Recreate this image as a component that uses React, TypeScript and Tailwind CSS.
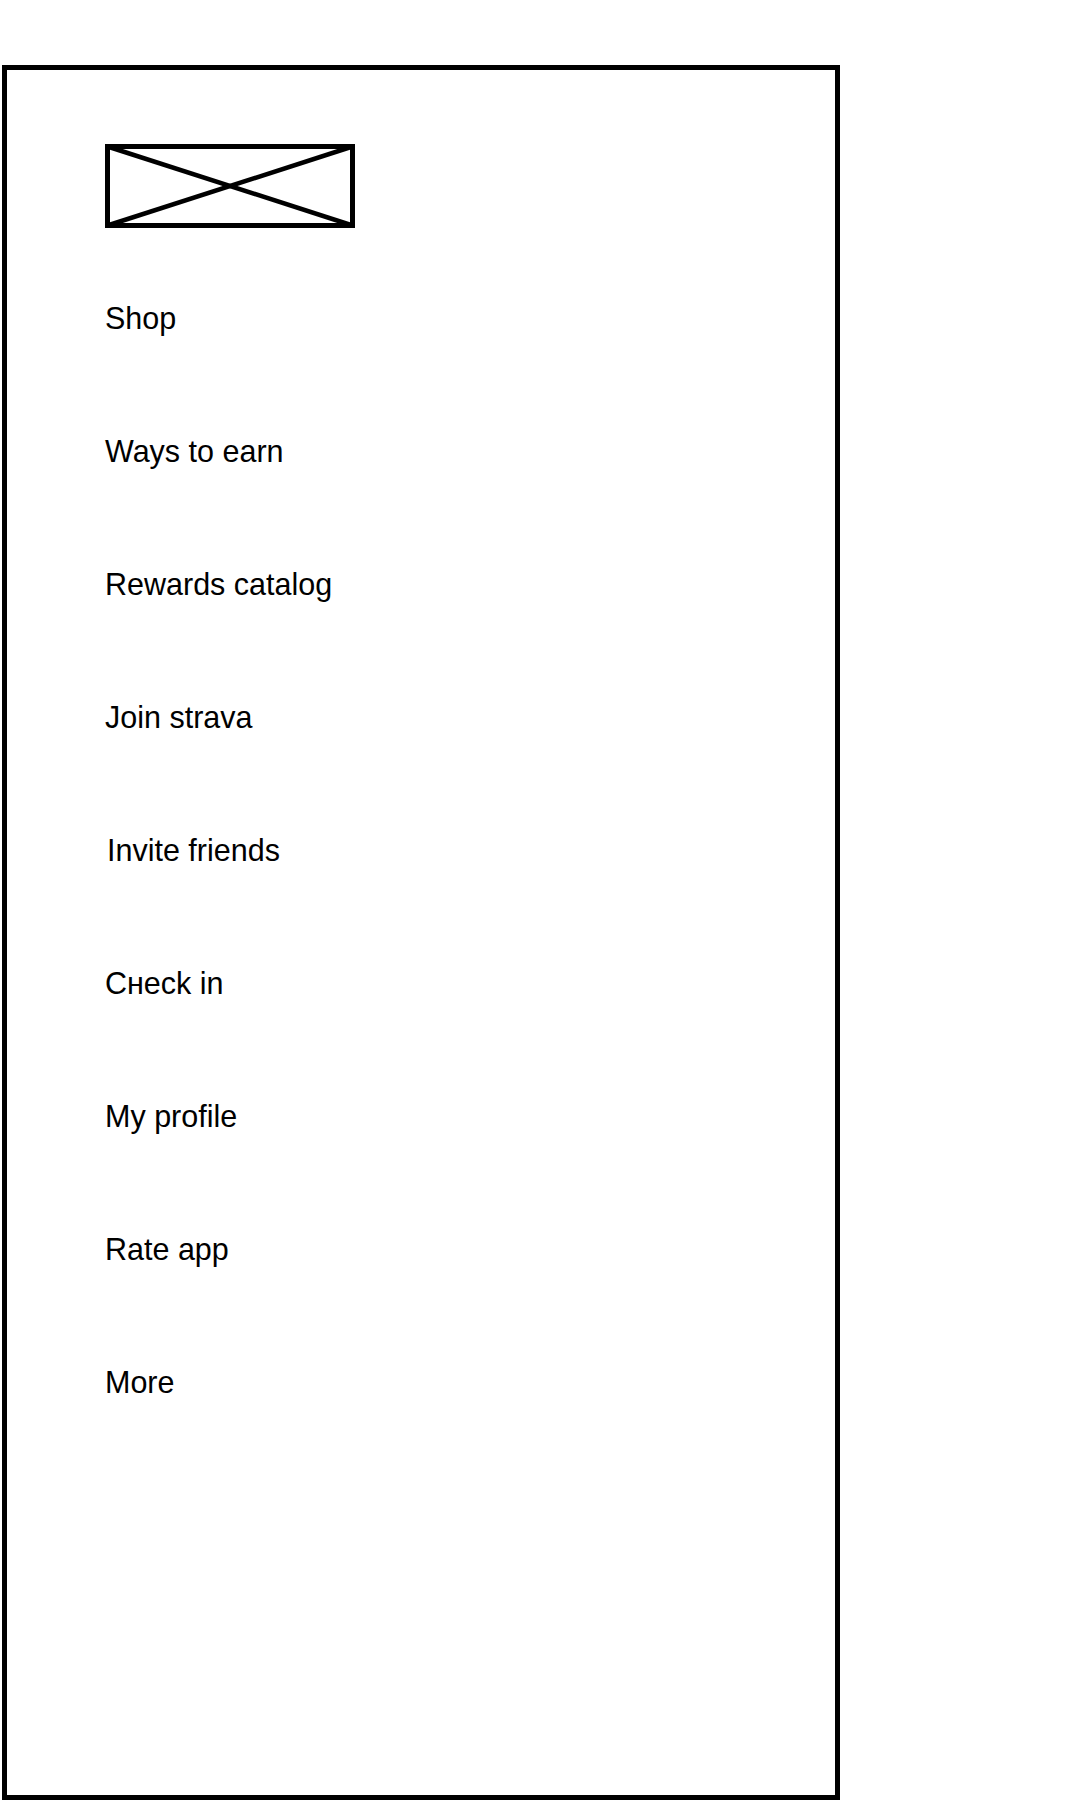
const items = [
  "Shop",
  "Ways to earn",
  "Rewards catalog",
  "Join strava",
  "Invite friends",
  "Cнeck in",
  "My profile",
  "Rate app",
  "More",
];

const LogoPlaceholder = () => (
  <svg width="250" height="84" viewBox="0 0 250 84" className="block">
    <rect x="2.5" y="2.5" width="245" height="79" fill="none" stroke="black" strokeWidth="5" />
    <line x1="2.5" y1="2.5" x2="247.5" y2="81.5" stroke="black" strokeWidth="4.5" />
    <line x1="2.5" y1="81.5" x2="247.5" y2="2.5" stroke="black" strokeWidth="4.5" />
  </svg>
);

const App = () => {
  return (
    <div
      className="w-[1080px] h-[1800px] bg-white pt-[65px] pl-[2px]"
      style={{ fontFamily: '"Liberation Sans", Arial, sans-serif' }}
    >
      <div className="w-[838px] h-[1735px] border-[5px] border-black pt-[74px] pl-[98px]">
        <LogoPlaceholder />
        <ul className="flex flex-col gap-[100px] mt-[74px]">
          {items.map((item) => (
            <li
              key={item}
              className={`text-[30.5px] leading-[33px] text-black ${item === "Invite friends" ? "pl-[2px]" : ""}`}
            >
              {item}
            </li>
          ))}
        </ul>
      </div>
    </div>
  );
};

export default App;
